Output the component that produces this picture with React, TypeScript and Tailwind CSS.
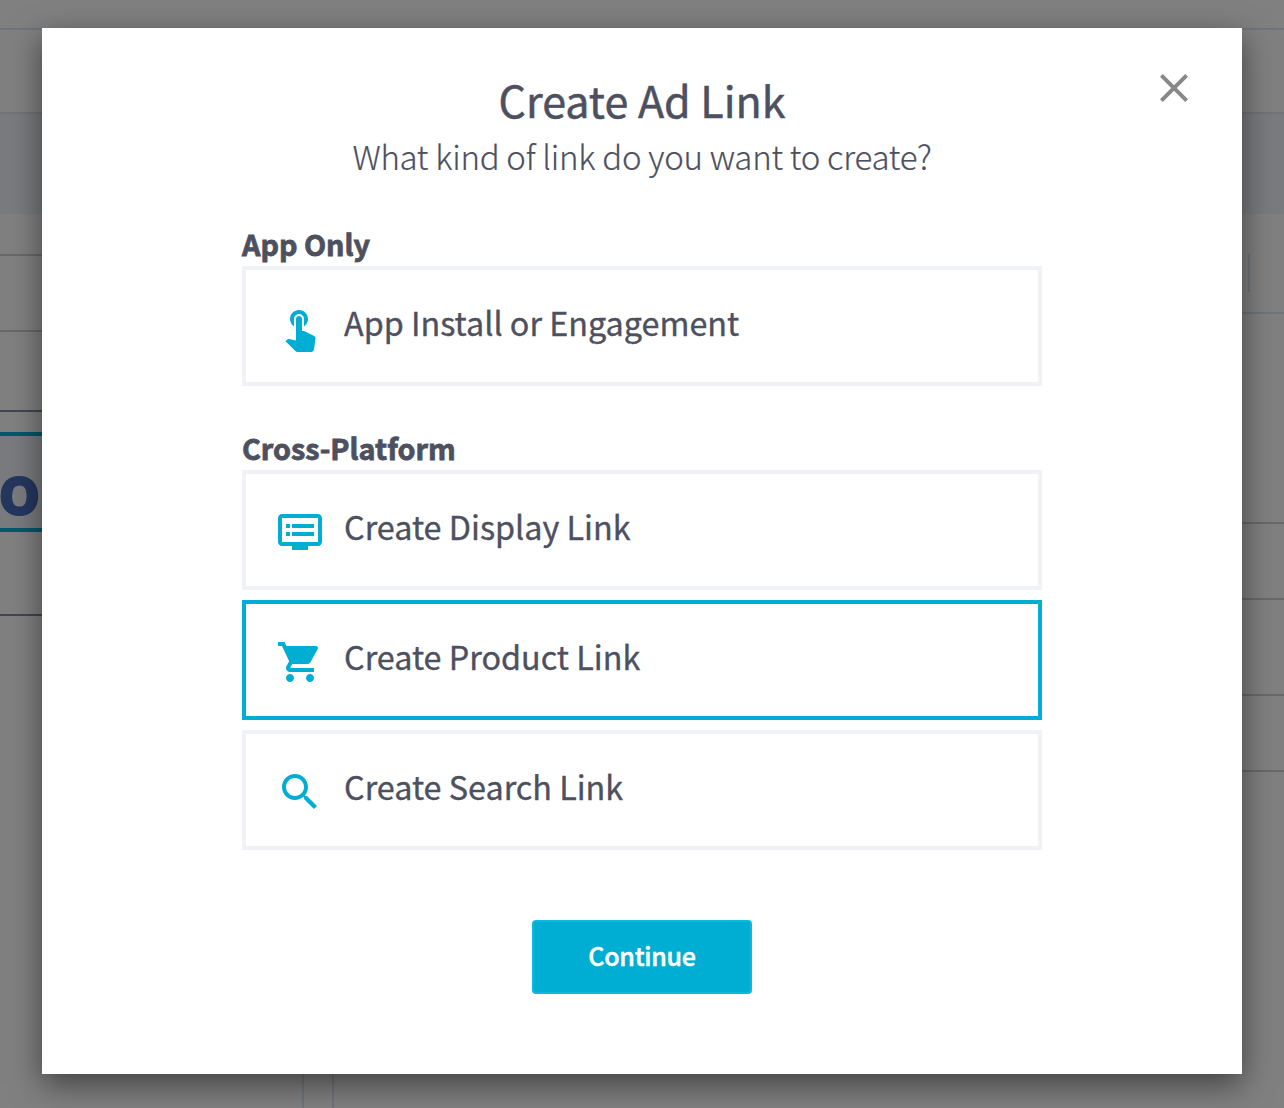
import React from "react";

const icons = {
  touch:
    "M9 11.24V7.5C9 6.12 10.12 5 11.5 5S14 6.12 14 7.5v3.74c1.21-.81 2-2.18 2-3.74C16 5.01 13.99 3 11.5 3S7 5.01 7 7.5c0 1.56.79 2.93 2 3.74zm9.84 4.63l-4.54-2.26c-.17-.07-.35-.11-.54-.11H13v-6c0-.83-.67-1.5-1.5-1.5S10 6.67 10 7.5v10.74l-3.43-.72c-.08-.01-.15-.03-.24-.03-.31 0-.59.13-.79.33l-.79.8 4.94 4.94c.27.27.65.44 1.06.44h6.79c.75 0 1.33-.55 1.44-1.28l.75-5.27c.01-.07.02-.14.02-.2 0-.62-.38-1.16-.91-1.38z",
  display:
    "M21 3H3c-1.1 0-2 .9-2 2v12c0 1.1.9 2 2 2h5v2h8v-2h5c1.1 0 2-.9 2-2V5c0-1.1-.9-2-2-2zm0 14H3V5h18v12zm-2-9H8v2h11V8zm0 4H8v2h11v-2zM7 8H5v2h2V8zm0 4H5v2h2v-2z",
  cart: "M7 18c-1.1 0-1.99.9-1.99 2S5.9 22 7 22s2-.9 2-2-.9-2-2-2zM1 2v2h2l3.6 7.59-1.35 2.45c-.16.28-.25.61-.25.96 0 1.1.9 2 2 2h12v-2H7.42c-.14 0-.25-.11-.25-.25l.03-.12.9-1.63h7.45c.75 0 1.41-.41 1.75-1.03l3.58-6.49c.08-.14.12-.31.12-.48 0-.55-.45-1-1-1H5.21l-.94-2H1zm16 16c-1.1 0-1.99.9-1.99 2s.89 2 1.99 2 2-.9 2-2-.9-2-2-2z",
  search:
    "M15.5 14h-.79l-.28-.27C15.41 12.59 16 11.11 16 9.5 16 5.91 13.09 3 9.5 3S3 5.91 3 9.5 5.91 16 9.5 16c1.61 0 3.09-.59 4.23-1.57l.27.28v.79l5 4.99L20.49 19l-4.99-5zm-6 0C7.01 14 5 11.99 5 9.5S7.01 5 9.5 5 14 7.01 14 9.5 11.99 14 9.5 14z",
  close:
    "M19 6.41L17.59 5 12 10.59 6.41 5 5 6.41 10.59 12 5 17.59 6.41 19 12 13.41 17.59 19 19 17.59 13.41 12z",
};

function Icon({ d, className }: { d: string; className: string }) {
  return (
    <svg viewBox="0 0 24 24" className={className} fill="currentColor" aria-hidden="true">
      <path d={d} />
    </svg>
  );
}

function Option({ icon, label, selected = false }: { icon: string; label: string; selected?: boolean }) {
  return (
    <button
      className={`flex h-[120px] w-full items-start border-4 bg-white pl-[30px] text-left ${
        selected ? "border-[#00aed3]" : "border-[#f1f2f6]"
      }`}
    >
      <Icon d={icon} className="mt-[34px] size-12 shrink-0 text-[#00aed3]" />
      <span className="mt-7 ml-5 text-[32.35px] leading-[48px] whitespace-nowrap [-webkit-text-stroke:0.35px]">
        {label}
      </span>
    </button>
  );
}

function SectionTitle({ children, className }: { children: string; className: string }) {
  return (
    <h2
      className={`h-[42px] text-[28.75px] leading-[40px] font-bold whitespace-nowrap [-webkit-text-stroke:0.8px] ${className}`}
    >
      {children}
    </h2>
  );
}

function PageLeft() {
  return (
    <div className="flex w-[42px] flex-col">
      <div className="h-[30px] border-b-2 border-[#6f757b]" />
      <div className="h-[84px] border-b-2 border-[#717375]" />
      <div className="h-[100px] bg-[#797b7e]" />
      <div className="h-[42px] border-b-2 border-[#696969]" />
      <div className="h-[76px] border-b-2 border-[#696969]" />
      <div className="h-[80px] border-b-2 border-[#414650]" />
      <div className="h-[20px]" />
      <div className="flex h-[100px] items-start border-y-4 border-[#00596c] bg-[#797b7e]">
        <span className="-ml-[2px] pt-[12px] font-['Open_Sans',sans-serif] text-[69px] leading-[80px] font-bold text-[#25365f] [-webkit-text-stroke:1px]">
          o
        </span>
      </div>
      <div className="h-[84px] border-b-2 border-[#414650]" />
    </div>
  );
}

function PageRight() {
  return (
    <div className="flex w-[42px] flex-col">
      <div className="h-[30px] border-b-2 border-[#6f757b]" />
      <div className="h-[84px] border-b-2 border-[#717375]" />
      <div className="h-[100px] bg-[#797b7e]" />
      <div className="h-[100px] border-b-2 border-[#6f757b] pt-10 pl-[6px]">
        <div className="h-[38px] w-[2px] bg-[#6f757b]" />
      </div>
      <div className="h-[210px] border-b-2 border-[#696969]" />
      <div className="h-[76px] border-b-2 border-[#696969]" />
      <div className="h-[96px] border-b-2 border-[#696969]" />
      <div className="h-[76px] border-b-2 border-[#696969]" />
    </div>
  );
}

export default function App() {
  return (
    <div className="relative h-[1108px] w-[1284px] overflow-hidden bg-[#808080] font-['Noto_Sans_CJK_SC','Noto_Sans',sans-serif] text-[#4d505e]">
      <div className="flex h-full justify-between" aria-hidden="true">
        <PageLeft />
        <div className="flex flex-1 items-end pl-[260px]">
          <div className="h-[40px] w-[32px] border-x-2 border-[#6f757b]" />
        </div>
        <PageRight />
      </div>

      <div className="absolute inset-0 flex items-start justify-center pt-7">
        <div
          role="dialog"
          className="relative flex h-[1046px] w-[1200px] flex-col items-center bg-white pt-[43px] shadow-[0_10px_30px_rgba(0,0,0,0.5)]"
        >
          <button className="absolute top-9 right-11 text-[#888888]" aria-label="Close">
            <Icon d={icons.close} className="size-12" />
          </button>
          <h1 className="text-[43px] leading-[56px] font-normal whitespace-nowrap [-webkit-text-stroke:0.5px]">
            Create Ad Link
          </h1>
          <p className="pt-px text-[33px] leading-[56px] font-light tracking-[-0.27px] whitespace-nowrap [-webkit-text-stroke:0.2px]">
            What kind of link do you want to create?
          </p>

          <div className="flex w-[800px] flex-col pt-3">
            <SectionTitle className="mt-[28px]">App Only</SectionTitle>
            <Option icon={icons.touch} label="App Install or Engagement" />
            <SectionTitle className="mt-[42px]">Cross-Platform</SectionTitle>
            <div className="flex flex-col gap-[10px]">
              <Option icon={icons.display} label="Create Display Link" />
              <Option icon={icons.cart} label="Create Product Link" selected />
              <Option icon={icons.search} label="Create Search Link" />
            </div>
          </div>

          <button className="mt-[70px] h-[74px] w-[220px] rounded-[4px] border-2 border-[#0bb9dd] bg-[#00aed3] pb-1 text-[25px] leading-[66px] font-medium tracking-[-0.25px] text-white [-webkit-text-stroke:0.5px]">
            Continue
          </button>
        </div>
      </div>
    </div>
  );
}
